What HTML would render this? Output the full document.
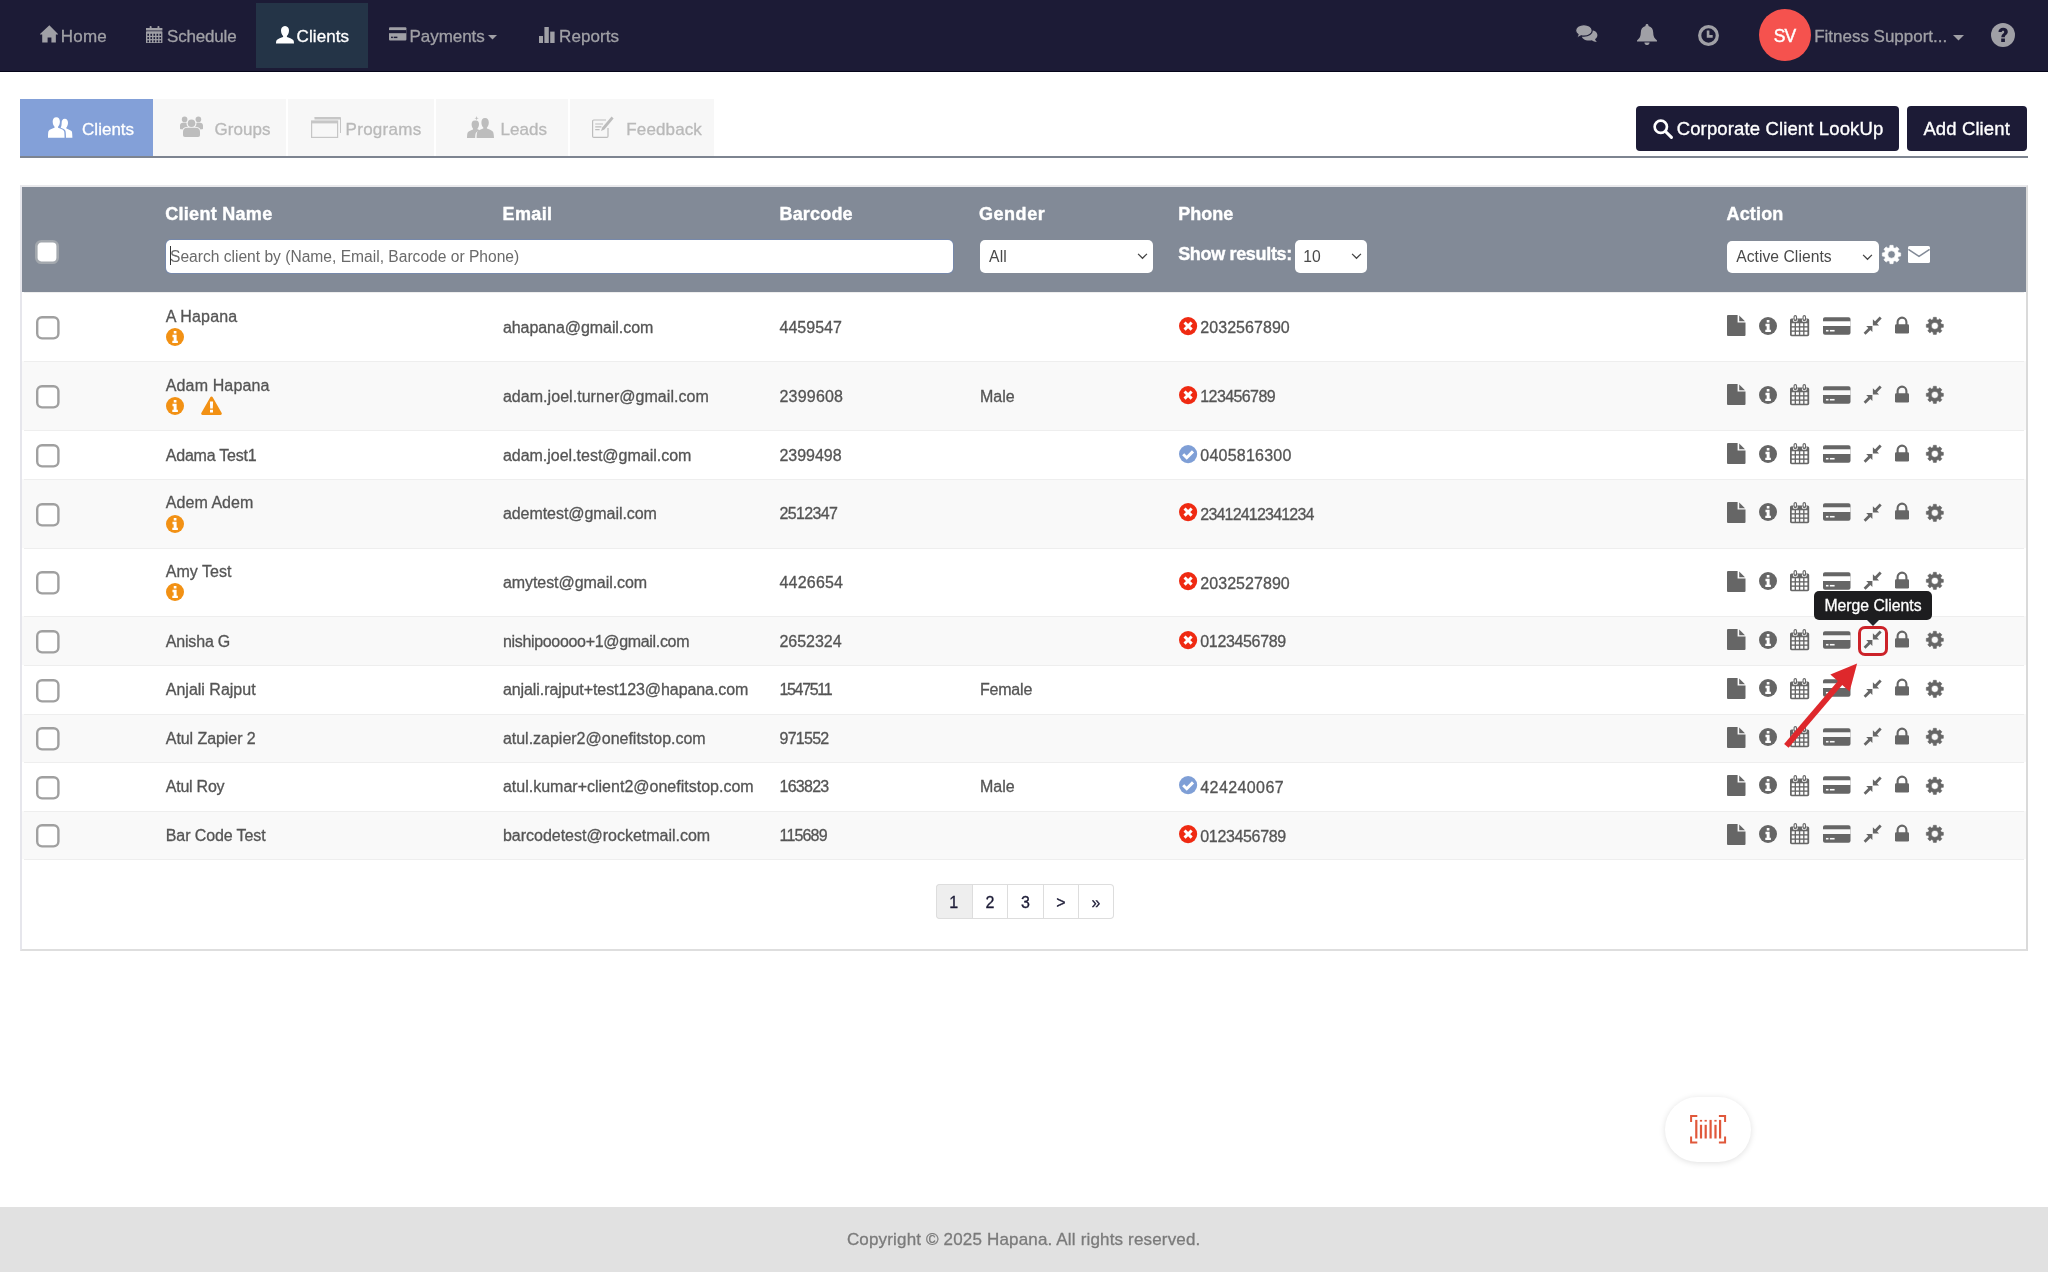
<!DOCTYPE html>
<html lang="en">
<head>
<meta charset="utf-8">
<title>Clients</title>
<style>
*{box-sizing:border-box;}
html,body{margin:0;padding:0;}
body{will-change:transform;width:2048px;height:1273px;overflow:hidden;background:#fff;font-family:"Liberation Sans",sans-serif;font-size:16px;color:#555;position:relative;}
.abs{position:absolute;}
svg{display:block;overflow:visible;}
i{display:block;}
#nav{position:absolute;left:0;top:0;width:2048px;height:72px;background:#1c1b36;border-bottom:1px solid #05051a;}
#nav .it{position:absolute;top:1px;height:71px;line-height:71px;color:#a0a0a6;font-size:17px;white-space:nowrap;-webkit-text-stroke:0.3px;}
#nav .act{position:absolute;left:256px;top:3px;width:112px;height:65px;background:#243447;}
.tab{position:absolute;top:99px;height:57px;background:#f7f7f7;color:#b9b9b9;font-size:17px;line-height:61px;white-space:nowrap;-webkit-text-stroke:0.3px;}
.tab span{position:absolute;top:0;}
.tab.on{background:#83a0d8;color:#fff;}
#tabline{position:absolute;left:20px;top:156px;width:2008px;height:2.4px;background:#7d8490;}
.btn{position:absolute;top:106px;height:45px;background:#1c1b36;color:#fff;border-radius:4px;font-size:18px;line-height:45px;white-space:nowrap;-webkit-text-stroke:0.35px;}
#panel{position:absolute;left:20px;top:185px;width:2008px;height:766px;border:2px solid #dadada;border-top-color:#e9e9ec;border-left-color:#e6e6ec;border-bottom-color:#dedede;background:#fff;}
#thead{position:absolute;left:22px;top:187px;width:2004px;height:105px;background:#828a97;}
.th{position:absolute;top:202.8px;color:#fff;font-weight:bold;font-size:18px;line-height:22px;white-space:nowrap;letter-spacing:0.15px;-webkit-text-stroke:0.4px #fff;}
.inp{position:absolute;background:#fff;border-radius:5px;height:32px;line-height:32px;font-size:15.7px;color:#4a4a4a;white-space:nowrap;}
.row{position:absolute;left:22px;width:2004px;}
.ln{position:absolute;left:2px;top:0;width:2000px;height:1px;background:#eeeeee;}
.row.alt{background:#f9f9f9;}
.row .c{position:absolute;white-space:nowrap;line-height:20px;font-size:16px;color:#555;-webkit-text-stroke:0.3px #555;}
.cb{position:absolute;left:14px;width:23px;height:23px;border:2px solid #999;border-radius:5px;background:#fff;}
#pag{position:absolute;left:935.5px;top:884px;height:35px;width:178.5px;display:flex;box-shadow:inset 0 0 0 1px #ddd;border-radius:4px;overflow:hidden;background:#fff;}
.pg{height:35px;line-height:38px;-webkit-text-stroke:0.3px;text-align:center;font-size:16px;color:#1c1b36;border-left:1px solid #ddd;}
.pg:first-child{border-left:none;}
.pg.on{background:#eee;box-shadow:inset 1px 0 0 #ddd,inset 0 1px 0 #ddd,inset 0 -1px 0 #ddd;border-radius:4px 0 0 4px;}

</style>
</head>
<body>
<div id="nav">
<div class="act"></div>
<svg class="abs" style="left:40px;top:25px" width="18" height="18" viewBox="0 0 18 18" ><path d="M9.35,0.2 L18,9.0 V9.5 H15.85 V17.6 H11.4 V12.6 H7.6 V17.6 H2.2 V9.5 H0 V9.0z" fill="#a0a0a6"/></svg>
<div class="it" style="left:60.8px;letter-spacing:0.185px">Home</div>
<svg class="abs" style="left:146.4px;top:25.9px" width="16.4" height="17.1" viewBox="0 0 16.4 17.1" ><rect x="0" y="2.0" width="16.4" height="2.5" fill="#a0a0a6"/><rect x="0" y="5.3" width="16.4" height="11.8" rx="0.6" fill="#a0a0a6"/><rect x="1.4" y="7.8" width="1.6" height="2.0" fill="#1c1b36"/><rect x="4.45" y="7.8" width="1.6" height="2.0" fill="#1c1b36"/><rect x="7.5" y="7.8" width="1.6" height="2.0" fill="#1c1b36"/><rect x="10.55" y="7.8" width="1.6" height="2.0" fill="#1c1b36"/><rect x="13.5" y="7.8" width="1.6" height="2.0" fill="#1c1b36"/><rect x="1.4" y="11.1" width="1.6" height="2.0" fill="#1c1b36"/><rect x="4.45" y="11.1" width="1.6" height="2.0" fill="#1c1b36"/><rect x="7.5" y="11.1" width="1.6" height="2.0" fill="#1c1b36"/><rect x="10.55" y="11.1" width="1.6" height="2.0" fill="#1c1b36"/><rect x="13.5" y="11.1" width="1.6" height="2.0" fill="#1c1b36"/><rect x="1.4" y="14.3" width="1.6" height="2.0" fill="#1c1b36"/><rect x="4.45" y="14.3" width="1.6" height="2.0" fill="#1c1b36"/><rect x="7.5" y="14.3" width="1.6" height="2.0" fill="#1c1b36"/><rect x="10.55" y="14.3" width="1.6" height="2.0" fill="#1c1b36"/><rect x="13.5" y="14.3" width="1.6" height="2.0" fill="#1c1b36"/><rect x="3.7" y="0" width="1.9" height="3.0" rx="0.8" fill="#a0a0a6"/><rect x="11.5" y="0" width="1.9" height="3.0" rx="0.8" fill="#a0a0a6"/></svg>
<div class="it" style="left:167.0px;letter-spacing:-0.174px">Schedule</div>
<svg class="abs" style="left:276px;top:26px" width="18" height="17.5" viewBox="0 0 18 17.5" ><path d="M9,0 C11.8,0 13,2.2 13,4.600 C13,7 12,9 10.900,10 V11 C12.5,11.8 16.4,12.6 17.400,14.200 C17.9,15 18,16.4 18,17.5 H0 C0,16.4 0.1,15 0.600,14.200 C1.6,12.6 5.5,11.8 7.100,11 V10 C6,9 5,7 5,4.600 C5,2.2 6.2,0 9,0z" fill="#fff"/></svg>
<div class="it" style="color:#fff;left:296.6px;letter-spacing:0.076px">Clients</div>
<svg class="abs" style="left:388.5px;top:27.2px" width="17.4" height="13.8" viewBox="0 0 17 13" ><rect x="0" y="0" width="17" height="13" rx="1" fill="#a0a0a6"/><rect x="0" y="2.8" width="17" height="3.000" fill="#1c1b36"/><rect x="2" y="9.2" width="1.8" height="1.4" fill="#1c1b36"/><rect x="4.6" y="9.2" width="3.6" height="1.4" fill="#1c1b36"/></svg>
<div class="it" style="left:409.5px;letter-spacing:-0.049px">Payments</div>
<svg class="abs" style="left:488px;top:35px" width="9" height="4.5" viewBox="0 0 10 5" ><path d="M0,0 H10 L5,5z" fill="#a0a0a6"/></svg>
<svg class="abs" style="left:539px;top:27px" width="16" height="16" viewBox="0 0 16 16" ><rect x="0" y="9" width="4" height="7" fill="#a0a0a6"/><rect x="5.4" y="0" width="4.4" height="16" fill="#a0a0a6"/><rect x="11.2" y="4.6" width="4.4" height="11.4" fill="#a0a0a6"/></svg>
<div class="it" style="left:559.1px;letter-spacing:0.081px">Reports</div>
<svg class="abs" style="left:1575px;top:24.4px" width="23" height="18.5" viewBox="-0.6 -0.6 23.2 18.6" ><path d="M13.6,5.2 C18.6,5.2 22,7.6 22,10.600 C22,12.2 21,13.600 19.6,14.600 C19.8,15.6 20.4,16.600 21.400,17.400 C19.6,17.4 17.8,16.800 16.400,15.800 C15.6,16 14.6,16 13.600,16 C9,16 6,13.600 6,10.600 C6,7.6 9,5.2 13.600,5.2z" fill="#a0a0a6"/><path d="M8.400,0 C13.200,0 16.800,2.500 16.800,5.800 C16.800,9.100 13.200,11.600 8.400,11.600 C7.500,11.600 6.600,11.500 5.800,11.300 C4.400,12.400 2.600,13.000 0.700,13.000 C1.700,12.100 2.300,11.000 2.500,9.900 C1.000,8.900 0,7.400 0,5.800 C0,2.500 3.600,0 8.400,0z" fill="#a0a0a6" stroke="#1c1b36" stroke-width="1.2"/></svg>
<svg class="abs" style="left:1637px;top:24px" width="20" height="21" viewBox="0 0 20 21" ><path d="M10,0 C10.900,0 11.500,0.600 11.500,1.500 V2.000 C14.600,2.700 16.200,5.400 16.200,8.600 C16.200,12.400 17.400,14.600 20,16.400 V17.400 H0 V16.400 C2.600,14.600 3.800,12.400 3.800,8.600 C3.800,5.400 5.400,2.700 8.500,2.000 V1.500 C8.500,0.600 9.100,0 10,0z M7.400,18.400 H12.600 C12.600,19.900 11.500,21 10,21 C8.500,21 7.400,19.900 7.400,18.400z" fill="#a0a0a6"/></svg>
<svg class="abs" style="left:1698px;top:25px" width="21" height="21" viewBox="0 0 20 20" ><circle cx="10" cy="10" r="8.400" fill="none" stroke="#a0a0a6" stroke-width="3.100"/><path d="M9.600,5.2 V10.8 H14.000" stroke="#a0a0a6" stroke-width="2.500" fill="none"/></svg>
<div class="abs" style="left:1759px;top:9px;width:52px;height:52px;border-radius:50%;background:#f5524e;color:#fff;font-size:17.5px;letter-spacing:-0.8px;-webkit-text-stroke:0.45px #fff;line-height:54px;text-align:center;text-indent:-1px;">SV</div>
<div class="it" style="left:1814.2px;letter-spacing:-0.013px">Fitness Support...</div>
<svg class="abs" style="left:1953px;top:35px" width="11" height="5.5" viewBox="0 0 10 5" ><path d="M0,0 H10 L5,5z" fill="#a0a0a6"/></svg>
<svg class="abs" style="left:1990.6px;top:22.8px" width="24" height="24" viewBox="0 0 20 20" ><circle cx="10" cy="10" r="10" fill="#a0a0a6"/><path d="M6.200,7.600 C6.200,5.200 7.900,3.900 10.100,3.900 C12.300,3.900 14.000,5.200 14.000,7.200 C14.000,9.600 11.500,9.800 11.500,11.800 H8.600 C8.600,9.000 11.000,8.800 11.000,7.400 C11.000,6.800 10.700,6.400 10.000,6.400 C9.300,6.400 9.000,6.900 9.000,7.600z M8.500,13.000 H11.600 V15.900 H8.500z" fill="#1c1b36"/></svg>
</div>
<div class="tab on" style="left:20px;width:133px"><svg class="abs" style="left:27.6px;top:18px" width="24.4" height="21" viewBox="0 0 25 21" ><path d="M8.500,0 C11,0 12.200,2.000 12.200,4.400 C12.200,6.800 11.300,8.800 10.300,9.800 V10.800 C11.800,11.600 15.400,12.400 16.400,14.000 C16.900,14.800 17,19.000 17,21 H0 C0,19.000 0.100,14.800 0.600,14.000 C1.600,12.400 5.200,11.600 6.700,10.800 V9.800 C5.700,8.800 4.800,6.800 4.800,4.400 C4.800,2.000 6,0 8.500,0z" fill="#fff"/><path d="M17.200,1.600 C19.400,1.600 20.500,3.400 20.500,5.600 C20.500,7.800 19.700,9.600 18.800,10.500 V11.400 C20.200,12.100 23.400,12.900 24.300,14.300 C24.800,15.100 25,19.200 25,21 H18.400 C18.400,18.600 18.300,14.600 17.600,13.400 C16.900,12.300 14.600,11.500 13.000,10.800 C13.600,9.600 14.000,8.000 14.000,5.600 C14.000,3.400 15.000,1.600 17.200,1.600z" fill="#fff"/></svg><span style="left:62.1px;letter-spacing:0.004px">Clients</span></div>
<div class="tab" style="left:153px;width:133px"><svg class="abs" style="left:27px;top:17px" width="23" height="21" viewBox="0 0 23 21" ><circle cx="11.500" cy="7.200" r="3.800" fill="#bdbdbd"/><path d="M5.000,21 C3.600,21 3.000,20.200 3.000,19.000 V15.600 C3.000,13.200 4.800,11.800 7.000,11.800 H16.000 C18.200,11.800 20.000,13.200 20.000,15.600 V19.000 C20.000,20.200 19.400,21 18.000,21z" fill="#bdbdbd"/><circle cx="4.600" cy="3.400" r="2.800" fill="#bdbdbd"/><circle cx="18.400" cy="3.400" r="2.800" fill="#bdbdbd"/><path d="M0,12.600 V9.600 C0,8.000 1.200,6.800 2.800,6.800 H6.600 C6.400,8.600 7.000,10.000 8.000,10.800 C5.400,10.800 3.400,11.600 2.400,13.400 C1.000,13.400 0,13.400 0,12.600z" fill="#bdbdbd"/><path d="M23,12.600 V9.600 C23,8.000 21.800,6.800 20.200,6.800 H16.400 C16.600,8.600 16.000,10.000 15.000,10.800 C17.600,10.800 19.600,11.600 20.600,13.400 C22.000,13.400 23,13.400 23,12.600z" fill="#bdbdbd"/></svg><span style="left:61.5px;letter-spacing:0.042px">Groups</span></div>
<div class="tab" style="left:288px;width:146px"><svg class="abs" style="left:23px;top:18px" width="30" height="21" viewBox="0 0 30 21" ><path d="M3.500,0.500 H29.500 V16.000" fill="none" stroke="#c6c6c6" stroke-width="1"/><rect x="3.500" y="0.500" width="26" height="2.000" fill="#c6c6c6"/><rect x="0.600" y="4.000" width="26" height="16.400" fill="none" stroke="#c6c6c6" stroke-width="1.200"/><rect x="0.600" y="4.000" width="26" height="2.400" fill="#c6c6c6"/></svg><span style="left:57.6px;letter-spacing:0.27px">Programs</span></div>
<div class="tab" style="left:436px;width:132px"><svg class="abs" style="left:31px;top:17.2px" width="27" height="22" viewBox="0 0 27 22" ><path d="M18.000,2.000 C20.600,2.000 21.800,4.000 21.800,6.400 C21.800,8.800 20.900,10.600 19.900,11.600 V12.600 C21.400,13.400 25.000,14.200 26.000,15.800 C26.500,16.600 27,20.000 27,22 H9.600 C9.600,20.000 9.800,16.600 10.300,15.800 C11.300,14.200 14.800,13.400 16.300,12.600 V11.600 C15.300,10.600 14.400,8.800 14.400,6.400 C14.400,4.000 15.500,2.000 18.000,2.000z" fill="#bdbdbd"/><path d="M9.000,4.400 C11.000,4.400 12.000,6.000 12.000,8.000 C12.000,10.000 11.300,11.600 10.500,12.400 V13.200 C11.200,13.600 12.200,13.900 13.200,14.300 C11.000,15.200 9.400,15.800 8.800,17.000 C8.300,18.000 8.200,20.400 8.200,22 H0 C0,20.400 0.200,17.200 0.700,16.400 C1.600,15.000 4.600,14.000 6.000,13.400 V12.400 C5.200,11.600 4.600,10.000 4.600,8.000 C4.600,6.000 5.600,4.400 7.600,4.400z" fill="#bdbdbd"/><path d="M9.600,0 L10.100,1.700 L11.800,2.200 L10.100,2.700 L9.600,4.400 L9.100,2.700 L7.400,2.200 L9.100,1.700z" fill="#bdbdbd"/></svg><span style="left:64.6px;letter-spacing:0.014px">Leads</span></div>
<div class="tab" style="left:570px;width:144px"><svg class="abs" style="left:22px;top:17px" width="22" height="22" viewBox="0 0 22 22" ><path d="M14.000,4.000 H1.800 a1.200,1.200 0 0 0 -1.200,1.200 V20.200 a1.200,1.200 0 0 0 1.200,1.200 H14.800 a1.200,1.200 0 0 0 1.200,-1.200 V12.000" fill="none" stroke="#bdbdbd" stroke-width="1.200"/><path d="M3.200,8.000 H11.000 M3.200,10.800 H9.400 M3.200,13.600 H7.600" stroke="#bdbdbd" stroke-width="1.200"/><path d="M19.600,0.600 L21.600,2.600 L12.400,13.400 L9.000,15.000 L10.200,11.400z" fill="#bdbdbd"/></svg><span style="left:56.3px;letter-spacing:0.129px">Feedback</span></div>
<div id="tabline"></div>
<div class="btn" style="left:1636px;width:263px"><svg class="abs" style="left:17px;top:13px" width="20" height="20" viewBox="0 0 19.5 19.5" ><circle cx="7.600" cy="7.600" r="6.000" fill="none" stroke="#fff" stroke-width="2.600"/><path d="M12.200,12.200 L18,18" stroke="#fff" stroke-width="3.000" stroke-linecap="round"/></svg><span class="abs" style="font-size:18.5px;left:40.7px;letter-spacing:0.134px">Corporate Client LookUp</span></div>
<div class="btn" style="left:1907px;width:120px"><span class="abs" style="font-size:18.5px;left:16.4px;letter-spacing:0.114px">Add Client</span></div>
<div id="panel"></div><div id="thead"></div>
<div class="th" style="left:165.2px;letter-spacing:0.297px">Client Name</div>
<div class="th" style="left:502.5px;letter-spacing:0.394px">Email</div>
<div class="th" style="left:779.5px;letter-spacing:0.174px">Barcode</div>
<div class="th" style="left:979.0px;letter-spacing:0.536px">Gender</div>
<div class="th" style="left:1178.2px;letter-spacing:0.047px">Phone</div>
<div class="th" style="left:1726.5px;letter-spacing:0.167px">Action</div>
<div class="th" style="top:242.6px;left:1178.2px;letter-spacing:-0.333px">Show results:</div>
<svg class="abs" style="left:35px;top:240px" width="24" height="24" viewBox="0 0 24 24" ><rect x="1.3" y="1.3" width="21.4" height="21.4" rx="5" fill="#fff" stroke="#a3a8ae" stroke-width="2.6"/></svg>
<div class="inp" style="left:166px;top:239.5px;width:786.5px;height:33px;line-height:33px;box-shadow:0 0 0 1px rgba(110,135,185,0.55);"><span class="abs" style="font-size:15.6px;color:#6a6a6a;left:4.0px;letter-spacing:-0.002px">Search client by (Name, Email, Barcode or Phone)</span><i class="abs" style="left:4px;top:6.5px;width:1px;height:19px;background:#333"></i></div>
<div class="inp" style="left:979.5px;top:239.5px;width:173px;height:33px;line-height:33px"><span class="abs" style="left:9.6px;letter-spacing:0.154px">All</span><svg class="abs" style="left:157.5px;top:13.5px" width="11" height="6.2" viewBox="0 0 12 7" ><path d="M1,1 L6,6 L11,1" stroke="#444" stroke-width="1.400" fill="none"/></svg></div>
<div class="inp" style="left:1295px;top:239.5px;width:72px;height:33px;line-height:33px"><span class="abs" style="left:8.3px;letter-spacing:-0.077px">10</span><svg class="abs" style="left:56.3px;top:13.5px" width="11" height="6.2" viewBox="0 0 12 7" ><path d="M1,1 L6,6 L11,1" stroke="#444" stroke-width="1.400" fill="none"/></svg></div>
<div class="inp" style="left:1727px;top:241px;width:152px"><span class="abs" style="left:9.2px;letter-spacing:0.033px">Active Clients</span><svg class="abs" style="left:135px;top:13px" width="11" height="6.2" viewBox="0 0 12 7" ><path d="M1,1 L6,6 L11,1" stroke="#444" stroke-width="1.400" fill="none"/></svg></div>
<svg class="abs" style="left:1882px;top:245px" width="19" height="19" viewBox="0 0 20 20" ><path d="M17.23,8.02 L19.65,8.32 L19.65,11.68 L17.23,11.98 L16.51,13.72 L18.02,15.64 L15.64,18.02 L13.72,16.51 L11.98,17.23 L11.68,19.65 L8.32,19.65 L8.02,17.23 L6.28,16.51 L4.36,18.02 L1.98,15.64 L3.49,13.72 L2.77,11.98 L0.35,11.68 L0.35,8.32 L2.77,8.02 L3.49,6.28 L1.98,4.36 L4.36,1.98 L6.28,3.49 L8.02,2.77 L8.32,0.35 L11.68,0.35 L11.98,2.77 L13.72,3.49 L15.64,1.98 L18.02,4.36 L16.51,6.28Z M13.90,10.00 A3.9,3.9 0 1 0 6.10,10.00 A3.9,3.9 0 1 0 13.90,10.00Z" fill="#fff" fill-rule="evenodd" stroke="#fff" stroke-width="0.6" stroke-linejoin="round"/></svg>
<svg class="abs" style="left:1908px;top:246px" width="22" height="17" viewBox="0 0 22 17" ><rect x="0" y="0" width="22" height="17" rx="1.600" fill="#fff"/><path d="M0.400,3.400 L11,10.400 L21.600,3.400" stroke="#828a97" stroke-width="1.500" fill="none"/></svg>
<div class="row" style="top:292px;height:69px"><i class="ln"></i><svg class="abs" style="left:14.200000000000003px;top:24.0px" width="23.6" height="23.6" viewBox="0 0 23.6 23.6" ><rect x="1.2" y="1.2" width="21.200000000000003" height="21.200000000000003" rx="4.8" fill="#fff" stroke="#a0a0a0" stroke-width="2.4"/></svg><div class="c" style="left:143.8px;top:14.5px;letter-spacing:0.152px">A Hapana</div><svg class="abs" style="left:144px;top:36.0px" width="18" height="18" viewBox="0 0 20 20" ><circle cx="10" cy="10" r="10" fill="#f29114"/><path d="M8.6,3.2 h3 v2.9 h-3z M7.2,7.6 h4.6 v6.6 h1.4 v2.6 H7 v-2.6 h1.5 v-4 H7.2z" fill="#fff"/></svg><div class="c" style="left:480.9px;top:25.7px;letter-spacing:-0.061px">ahapana@gmail.com</div><div class="c" style="left:757.5px;top:25.7px;letter-spacing:0.015px">4459547</div><svg class="abs" style="left:1156.8px;top:24.6px" width="18.2" height="18.2" viewBox="0 0 20 20" ><circle cx="10" cy="10" r="10" fill="#ef2a12"/><path d="M6.1,6.1 L13.9,13.9 M13.9,6.1 L6.1,13.9" stroke="#fff" stroke-width="3.3" stroke-linecap="butt"/></svg><div class="c" style="left:1178.3px;top:26.3px;letter-spacing:0.052px">2032567890</div><svg class="abs" style="left:1705px;top:23.3px" width="18.5" height="21" viewBox="0 0 18.5 21" ><path d="M1,0 H10.6 V7.6 H18.5 V20 a1,1 0 0 1 -1,1 H1 a1,1 0 0 1 -1,-1 V1 a1,1 0 0 1 1,-1z M12.2,0.6 L18,6.2 H12.2z" fill="#666"/></svg><svg class="abs" style="left:1736.5px;top:24.7px" width="18" height="18" viewBox="0 0 20 20" ><circle cx="10" cy="10" r="10" fill="#666"/><path d="M8.6,3.2 h3 v2.9 h-3z M7.2,7.6 h4.6 v6.6 h1.4 v2.6 H7 v-2.6 h1.5 v-4 H7.2z" fill="#fff"/></svg><svg class="abs" style="left:1768px;top:23.2px" width="19.2" height="21.2" viewBox="0 0 19.2 21.2" ><rect x="0" y="3.5" width="19.2" height="17.7" rx="1.6" fill="#666"/><rect x="1.75" y="8.30" width="2.9" height="2.9" fill="#fff"/><rect x="6.00" y="8.30" width="2.9" height="2.9" fill="#fff"/><rect x="10.25" y="8.30" width="2.9" height="2.9" fill="#fff"/><rect x="14.50" y="8.30" width="2.9" height="2.9" fill="#fff"/><rect x="1.75" y="12.55" width="2.9" height="2.9" fill="#fff"/><rect x="6.00" y="12.55" width="2.9" height="2.9" fill="#fff"/><rect x="10.25" y="12.55" width="2.9" height="2.9" fill="#fff"/><rect x="14.50" y="12.55" width="2.9" height="2.9" fill="#fff"/><rect x="1.75" y="16.80" width="2.9" height="2.9" fill="#fff"/><rect x="6.00" y="16.80" width="2.9" height="2.9" fill="#fff"/><rect x="10.25" y="16.80" width="2.9" height="2.9" fill="#fff"/><rect x="14.50" y="16.80" width="2.9" height="2.9" fill="#fff"/><rect x="2.95" y="3.5" width="4.7" height="3.3" rx="1.2" fill="#fff"/><rect x="3.55" y="0" width="3.5" height="6.2" rx="1.75" fill="#666"/><rect x="4.65" y="1.2" width="1.3" height="3.4" rx="0.65" fill="#fff"/><rect x="11.95" y="3.5" width="4.7" height="3.3" rx="1.2" fill="#fff"/><rect x="12.55" y="0" width="3.5" height="6.2" rx="1.75" fill="#666"/><rect x="13.65" y="1.2" width="1.3" height="3.4" rx="0.65" fill="#fff"/></svg><svg class="abs" style="left:1801px;top:24.7px" width="27.5" height="18" viewBox="0 0 28 18" ><rect x="0" y="0" width="28" height="18" rx="2" fill="#666"/><rect x="0" y="4.2" width="28" height="4.8" fill="#fff"/><rect x="3" y="13" width="2.6" height="1.6" fill="#fff"/><rect x="7.0" y="13" width="4.8" height="1.6" fill="#fff"/></svg><svg class="abs" style="left:1842.1px;top:24.8px" width="17.3" height="17.3" viewBox="0 0 17.3 17.3" ><path d="M16.7,0.6 L11.4,5.9" stroke="#666" stroke-width="2.8" fill="none"/><path d="M8.9,2.2 V8.4 H15.1z" fill="#666"/><path d="M0.6,16.7 L5.9,11.4" stroke="#666" stroke-width="2.8" fill="none"/><path d="M8.4,15.1 V8.9 H2.2z" fill="#666"/></svg><svg class="abs" style="left:1873px;top:24.7px" width="14" height="16.5" viewBox="0 0 14 16.5" ><path d="M2.6,8 V5 a4.4,4.4 0 0 1 8.8,0 V8" stroke="#666" stroke-width="2.1" fill="none"/><rect x="0" y="7.2" width="14" height="9.3" rx="1.2" fill="#666"/></svg><svg class="abs" style="left:1903.6px;top:24.8px" width="17.7" height="17.7" viewBox="0 0 20 20" ><path d="M17.23,8.02 L19.65,8.32 L19.65,11.68 L17.23,11.98 L16.51,13.72 L18.02,15.64 L15.64,18.02 L13.72,16.51 L11.98,17.23 L11.68,19.65 L8.32,19.65 L8.02,17.23 L6.28,16.51 L4.36,18.02 L1.98,15.64 L3.49,13.72 L2.77,11.98 L0.35,11.68 L0.35,8.32 L2.77,8.02 L3.49,6.28 L1.98,4.36 L4.36,1.98 L6.28,3.49 L8.02,2.77 L8.32,0.35 L11.68,0.35 L11.98,2.77 L13.72,3.49 L15.64,1.98 L18.02,4.36 L16.51,6.28Z M13.90,10.00 A3.9,3.9 0 1 0 6.10,10.00 A3.9,3.9 0 1 0 13.90,10.00Z" fill="#666" fill-rule="evenodd" stroke="#666" stroke-width="0.6" stroke-linejoin="round"/></svg></div>
<div class="row alt" style="top:361px;height:69px"><i class="ln"></i><svg class="abs" style="left:14.200000000000003px;top:24.0px" width="23.6" height="23.6" viewBox="0 0 23.6 23.6" ><rect x="1.2" y="1.2" width="21.200000000000003" height="21.200000000000003" rx="4.8" fill="#fff" stroke="#a0a0a0" stroke-width="2.4"/></svg><div class="c" style="left:143.8px;top:14.5px;letter-spacing:0.128px">Adam Hapana</div><svg class="abs" style="left:144px;top:36.0px" width="18" height="18" viewBox="0 0 20 20" ><circle cx="10" cy="10" r="10" fill="#f29114"/><path d="M8.6,3.2 h3 v2.9 h-3z M7.2,7.6 h4.6 v6.6 h1.4 v2.6 H7 v-2.6 h1.5 v-4 H7.2z" fill="#fff"/></svg><svg class="abs" style="left:179px;top:35.0px" width="21" height="19" viewBox="0 0 21 19" ><path d="M10.5,0.6 a1.4,1.4 0 0 1 1.2,0.7 L20.7,17 a1.4,1.4 0 0 1 -1.2,2 H1.500 a1.4,1.4 0 0 1 -1.2,-2 L9.3,1.300 a1.4,1.4 0 0 1 1.2,-0.7z" fill="#f29114"/><path d="M8.9,5.6 h3.2 l-0.300,7.000 h-2.600z M9.000,13.800 h3.000 v2.800 h-3.000z" fill="#fff"/></svg><div class="c" style="left:480.9px;top:25.7px;letter-spacing:0.047px">adam.joel.turner@gmail.com</div><div class="c" style="left:757.5px;top:25.7px;letter-spacing:0.2px">2399608</div><div class="c" style="left:957.9px;top:25.7px;letter-spacing:0.053px">Male</div><svg class="abs" style="left:1156.8px;top:24.6px" width="18.2" height="18.2" viewBox="0 0 20 20" ><circle cx="10" cy="10" r="10" fill="#ef2a12"/><path d="M6.1,6.1 L13.9,13.9 M13.9,6.1 L6.1,13.9" stroke="#fff" stroke-width="3.3" stroke-linecap="butt"/></svg><div class="c" style="left:1178.3px;top:26.3px;letter-spacing:-0.599px">123456789</div><svg class="abs" style="left:1705px;top:23.3px" width="18.5" height="21" viewBox="0 0 18.5 21" ><path d="M1,0 H10.6 V7.6 H18.5 V20 a1,1 0 0 1 -1,1 H1 a1,1 0 0 1 -1,-1 V1 a1,1 0 0 1 1,-1z M12.2,0.6 L18,6.2 H12.2z" fill="#666"/></svg><svg class="abs" style="left:1736.5px;top:24.7px" width="18" height="18" viewBox="0 0 20 20" ><circle cx="10" cy="10" r="10" fill="#666"/><path d="M8.6,3.2 h3 v2.9 h-3z M7.2,7.6 h4.6 v6.6 h1.4 v2.6 H7 v-2.6 h1.5 v-4 H7.2z" fill="#fff"/></svg><svg class="abs" style="left:1768px;top:23.2px" width="19.2" height="21.2" viewBox="0 0 19.2 21.2" ><rect x="0" y="3.5" width="19.2" height="17.7" rx="1.6" fill="#666"/><rect x="1.75" y="8.30" width="2.9" height="2.9" fill="#f9f9f9"/><rect x="6.00" y="8.30" width="2.9" height="2.9" fill="#f9f9f9"/><rect x="10.25" y="8.30" width="2.9" height="2.9" fill="#f9f9f9"/><rect x="14.50" y="8.30" width="2.9" height="2.9" fill="#f9f9f9"/><rect x="1.75" y="12.55" width="2.9" height="2.9" fill="#f9f9f9"/><rect x="6.00" y="12.55" width="2.9" height="2.9" fill="#f9f9f9"/><rect x="10.25" y="12.55" width="2.9" height="2.9" fill="#f9f9f9"/><rect x="14.50" y="12.55" width="2.9" height="2.9" fill="#f9f9f9"/><rect x="1.75" y="16.80" width="2.9" height="2.9" fill="#f9f9f9"/><rect x="6.00" y="16.80" width="2.9" height="2.9" fill="#f9f9f9"/><rect x="10.25" y="16.80" width="2.9" height="2.9" fill="#f9f9f9"/><rect x="14.50" y="16.80" width="2.9" height="2.9" fill="#f9f9f9"/><rect x="2.95" y="3.5" width="4.7" height="3.3" rx="1.2" fill="#f9f9f9"/><rect x="3.55" y="0" width="3.5" height="6.2" rx="1.75" fill="#666"/><rect x="4.65" y="1.2" width="1.3" height="3.4" rx="0.65" fill="#f9f9f9"/><rect x="11.95" y="3.5" width="4.7" height="3.3" rx="1.2" fill="#f9f9f9"/><rect x="12.55" y="0" width="3.5" height="6.2" rx="1.75" fill="#666"/><rect x="13.65" y="1.2" width="1.3" height="3.4" rx="0.65" fill="#f9f9f9"/></svg><svg class="abs" style="left:1801px;top:24.7px" width="27.5" height="18" viewBox="0 0 28 18" ><rect x="0" y="0" width="28" height="18" rx="2" fill="#666"/><rect x="0" y="4.2" width="28" height="4.8" fill="#f9f9f9"/><rect x="3" y="13" width="2.6" height="1.6" fill="#f9f9f9"/><rect x="7.0" y="13" width="4.8" height="1.6" fill="#f9f9f9"/></svg><svg class="abs" style="left:1842.1px;top:24.8px" width="17.3" height="17.3" viewBox="0 0 17.3 17.3" ><path d="M16.7,0.6 L11.4,5.9" stroke="#666" stroke-width="2.8" fill="none"/><path d="M8.9,2.2 V8.4 H15.1z" fill="#666"/><path d="M0.6,16.7 L5.9,11.4" stroke="#666" stroke-width="2.8" fill="none"/><path d="M8.4,15.1 V8.9 H2.2z" fill="#666"/></svg><svg class="abs" style="left:1873px;top:24.7px" width="14" height="16.5" viewBox="0 0 14 16.5" ><path d="M2.6,8 V5 a4.4,4.4 0 0 1 8.8,0 V8" stroke="#666" stroke-width="2.1" fill="none"/><rect x="0" y="7.2" width="14" height="9.3" rx="1.2" fill="#666"/></svg><svg class="abs" style="left:1903.6px;top:24.8px" width="17.7" height="17.7" viewBox="0 0 20 20" ><path d="M17.23,8.02 L19.65,8.32 L19.65,11.68 L17.23,11.98 L16.51,13.72 L18.02,15.64 L15.64,18.02 L13.72,16.51 L11.98,17.23 L11.68,19.65 L8.32,19.65 L8.02,17.23 L6.28,16.51 L4.36,18.02 L1.98,15.64 L3.49,13.72 L2.77,11.98 L0.35,11.68 L0.35,8.32 L2.77,8.02 L3.49,6.28 L1.98,4.36 L4.36,1.98 L6.28,3.49 L8.02,2.77 L8.32,0.35 L11.68,0.35 L11.98,2.77 L13.72,3.49 L15.64,1.98 L18.02,4.36 L16.51,6.28Z M13.90,10.00 A3.9,3.9 0 1 0 6.10,10.00 A3.9,3.9 0 1 0 13.90,10.00Z" fill="#666" fill-rule="evenodd" stroke="#666" stroke-width="0.6" stroke-linejoin="round"/></svg></div>
<div class="row" style="top:430px;height:49px"><i class="ln"></i><svg class="abs" style="left:14.200000000000003px;top:14.0px" width="23.6" height="23.6" viewBox="0 0 23.6 23.6" ><rect x="1.2" y="1.2" width="21.200000000000003" height="21.200000000000003" rx="4.8" fill="#fff" stroke="#a0a0a0" stroke-width="2.4"/></svg><div class="c" style="left:143.8px;top:15.7px;letter-spacing:-0.218px">Adama Test1</div><div class="c" style="left:480.9px;top:15.7px;letter-spacing:-0.011px">adam.joel.test@gmail.com</div><div class="c" style="left:757.5px;top:15.7px;letter-spacing:-0.042px">2399498</div><svg class="abs" style="left:1156.8px;top:14.6px" width="18.2" height="18.2" viewBox="0 0 20 20" ><circle cx="10" cy="10" r="10" fill="#7f9fd6"/><path d="M4.6,10.2 L8.5,14.0 L15.4,7.0" stroke="#fff" stroke-width="3.3" fill="none"/></svg><div class="c" style="left:1178.3px;top:16.3px;letter-spacing:0.232px">0405816300</div><svg class="abs" style="left:1705px;top:13.3px" width="18.5" height="21" viewBox="0 0 18.5 21" ><path d="M1,0 H10.6 V7.6 H18.5 V20 a1,1 0 0 1 -1,1 H1 a1,1 0 0 1 -1,-1 V1 a1,1 0 0 1 1,-1z M12.2,0.6 L18,6.2 H12.2z" fill="#666"/></svg><svg class="abs" style="left:1736.5px;top:14.700000000000001px" width="18" height="18" viewBox="0 0 20 20" ><circle cx="10" cy="10" r="10" fill="#666"/><path d="M8.6,3.2 h3 v2.9 h-3z M7.2,7.6 h4.6 v6.6 h1.4 v2.6 H7 v-2.6 h1.5 v-4 H7.2z" fill="#fff"/></svg><svg class="abs" style="left:1768px;top:13.200000000000001px" width="19.2" height="21.2" viewBox="0 0 19.2 21.2" ><rect x="0" y="3.5" width="19.2" height="17.7" rx="1.6" fill="#666"/><rect x="1.75" y="8.30" width="2.9" height="2.9" fill="#fff"/><rect x="6.00" y="8.30" width="2.9" height="2.9" fill="#fff"/><rect x="10.25" y="8.30" width="2.9" height="2.9" fill="#fff"/><rect x="14.50" y="8.30" width="2.9" height="2.9" fill="#fff"/><rect x="1.75" y="12.55" width="2.9" height="2.9" fill="#fff"/><rect x="6.00" y="12.55" width="2.9" height="2.9" fill="#fff"/><rect x="10.25" y="12.55" width="2.9" height="2.9" fill="#fff"/><rect x="14.50" y="12.55" width="2.9" height="2.9" fill="#fff"/><rect x="1.75" y="16.80" width="2.9" height="2.9" fill="#fff"/><rect x="6.00" y="16.80" width="2.9" height="2.9" fill="#fff"/><rect x="10.25" y="16.80" width="2.9" height="2.9" fill="#fff"/><rect x="14.50" y="16.80" width="2.9" height="2.9" fill="#fff"/><rect x="2.95" y="3.5" width="4.7" height="3.3" rx="1.2" fill="#fff"/><rect x="3.55" y="0" width="3.5" height="6.2" rx="1.75" fill="#666"/><rect x="4.65" y="1.2" width="1.3" height="3.4" rx="0.65" fill="#fff"/><rect x="11.95" y="3.5" width="4.7" height="3.3" rx="1.2" fill="#fff"/><rect x="12.55" y="0" width="3.5" height="6.2" rx="1.75" fill="#666"/><rect x="13.65" y="1.2" width="1.3" height="3.4" rx="0.65" fill="#fff"/></svg><svg class="abs" style="left:1801px;top:14.700000000000001px" width="27.5" height="18" viewBox="0 0 28 18" ><rect x="0" y="0" width="28" height="18" rx="2" fill="#666"/><rect x="0" y="4.2" width="28" height="4.8" fill="#fff"/><rect x="3" y="13" width="2.6" height="1.6" fill="#fff"/><rect x="7.0" y="13" width="4.8" height="1.6" fill="#fff"/></svg><svg class="abs" style="left:1842.1px;top:14.8px" width="17.3" height="17.3" viewBox="0 0 17.3 17.3" ><path d="M16.7,0.6 L11.4,5.9" stroke="#666" stroke-width="2.8" fill="none"/><path d="M8.9,2.2 V8.4 H15.1z" fill="#666"/><path d="M0.6,16.7 L5.9,11.4" stroke="#666" stroke-width="2.8" fill="none"/><path d="M8.4,15.1 V8.9 H2.2z" fill="#666"/></svg><svg class="abs" style="left:1873px;top:14.700000000000001px" width="14" height="16.5" viewBox="0 0 14 16.5" ><path d="M2.6,8 V5 a4.4,4.4 0 0 1 8.8,0 V8" stroke="#666" stroke-width="2.1" fill="none"/><rect x="0" y="7.2" width="14" height="9.3" rx="1.2" fill="#666"/></svg><svg class="abs" style="left:1903.6px;top:14.8px" width="17.7" height="17.7" viewBox="0 0 20 20" ><path d="M17.23,8.02 L19.65,8.32 L19.65,11.68 L17.23,11.98 L16.51,13.72 L18.02,15.64 L15.64,18.02 L13.72,16.51 L11.98,17.23 L11.68,19.65 L8.32,19.65 L8.02,17.23 L6.28,16.51 L4.36,18.02 L1.98,15.64 L3.49,13.72 L2.77,11.98 L0.35,11.68 L0.35,8.32 L2.77,8.02 L3.49,6.28 L1.98,4.36 L4.36,1.98 L6.28,3.49 L8.02,2.77 L8.32,0.35 L11.68,0.35 L11.98,2.77 L13.72,3.49 L15.64,1.98 L18.02,4.36 L16.51,6.28Z M13.90,10.00 A3.9,3.9 0 1 0 6.10,10.00 A3.9,3.9 0 1 0 13.90,10.00Z" fill="#666" fill-rule="evenodd" stroke="#666" stroke-width="0.6" stroke-linejoin="round"/></svg></div>
<div class="row alt" style="top:479px;height:68.5px"><i class="ln"></i><svg class="abs" style="left:14.200000000000003px;top:23.75px" width="23.6" height="23.6" viewBox="0 0 23.6 23.6" ><rect x="1.2" y="1.2" width="21.200000000000003" height="21.200000000000003" rx="4.8" fill="#fff" stroke="#a0a0a0" stroke-width="2.4"/></svg><div class="c" style="left:143.8px;top:14.2px;letter-spacing:0.049px">Adem Adem</div><svg class="abs" style="left:144px;top:35.75px" width="18" height="18" viewBox="0 0 20 20" ><circle cx="10" cy="10" r="10" fill="#f29114"/><path d="M8.6,3.2 h3 v2.9 h-3z M7.2,7.6 h4.6 v6.6 h1.4 v2.6 H7 v-2.6 h1.5 v-4 H7.2z" fill="#fff"/></svg><div class="c" style="left:480.9px;top:25.4px;letter-spacing:-0.054px">ademtest@gmail.com</div><div class="c" style="left:757.5px;top:25.4px;letter-spacing:-0.628px">2512347</div><svg class="abs" style="left:1156.8px;top:24.35px" width="18.2" height="18.2" viewBox="0 0 20 20" ><circle cx="10" cy="10" r="10" fill="#ef2a12"/><path d="M6.1,6.1 L13.9,13.9 M13.9,6.1 L6.1,13.9" stroke="#fff" stroke-width="3.3" stroke-linecap="butt"/></svg><div class="c" style="left:1178.3px;top:26.1px;letter-spacing:-0.806px">23412412341234</div><svg class="abs" style="left:1705px;top:23.05px" width="18.5" height="21" viewBox="0 0 18.5 21" ><path d="M1,0 H10.6 V7.6 H18.5 V20 a1,1 0 0 1 -1,1 H1 a1,1 0 0 1 -1,-1 V1 a1,1 0 0 1 1,-1z M12.2,0.6 L18,6.2 H12.2z" fill="#666"/></svg><svg class="abs" style="left:1736.5px;top:24.45px" width="18" height="18" viewBox="0 0 20 20" ><circle cx="10" cy="10" r="10" fill="#666"/><path d="M8.6,3.2 h3 v2.9 h-3z M7.2,7.6 h4.6 v6.6 h1.4 v2.6 H7 v-2.6 h1.5 v-4 H7.2z" fill="#fff"/></svg><svg class="abs" style="left:1768px;top:22.95px" width="19.2" height="21.2" viewBox="0 0 19.2 21.2" ><rect x="0" y="3.5" width="19.2" height="17.7" rx="1.6" fill="#666"/><rect x="1.75" y="8.30" width="2.9" height="2.9" fill="#f9f9f9"/><rect x="6.00" y="8.30" width="2.9" height="2.9" fill="#f9f9f9"/><rect x="10.25" y="8.30" width="2.9" height="2.9" fill="#f9f9f9"/><rect x="14.50" y="8.30" width="2.9" height="2.9" fill="#f9f9f9"/><rect x="1.75" y="12.55" width="2.9" height="2.9" fill="#f9f9f9"/><rect x="6.00" y="12.55" width="2.9" height="2.9" fill="#f9f9f9"/><rect x="10.25" y="12.55" width="2.9" height="2.9" fill="#f9f9f9"/><rect x="14.50" y="12.55" width="2.9" height="2.9" fill="#f9f9f9"/><rect x="1.75" y="16.80" width="2.9" height="2.9" fill="#f9f9f9"/><rect x="6.00" y="16.80" width="2.9" height="2.9" fill="#f9f9f9"/><rect x="10.25" y="16.80" width="2.9" height="2.9" fill="#f9f9f9"/><rect x="14.50" y="16.80" width="2.9" height="2.9" fill="#f9f9f9"/><rect x="2.95" y="3.5" width="4.7" height="3.3" rx="1.2" fill="#f9f9f9"/><rect x="3.55" y="0" width="3.5" height="6.2" rx="1.75" fill="#666"/><rect x="4.65" y="1.2" width="1.3" height="3.4" rx="0.65" fill="#f9f9f9"/><rect x="11.95" y="3.5" width="4.7" height="3.3" rx="1.2" fill="#f9f9f9"/><rect x="12.55" y="0" width="3.5" height="6.2" rx="1.75" fill="#666"/><rect x="13.65" y="1.2" width="1.3" height="3.4" rx="0.65" fill="#f9f9f9"/></svg><svg class="abs" style="left:1801px;top:24.45px" width="27.5" height="18" viewBox="0 0 28 18" ><rect x="0" y="0" width="28" height="18" rx="2" fill="#666"/><rect x="0" y="4.2" width="28" height="4.8" fill="#f9f9f9"/><rect x="3" y="13" width="2.6" height="1.6" fill="#f9f9f9"/><rect x="7.0" y="13" width="4.8" height="1.6" fill="#f9f9f9"/></svg><svg class="abs" style="left:1842.1px;top:24.55px" width="17.3" height="17.3" viewBox="0 0 17.3 17.3" ><path d="M16.7,0.6 L11.4,5.9" stroke="#666" stroke-width="2.8" fill="none"/><path d="M8.9,2.2 V8.4 H15.1z" fill="#666"/><path d="M0.6,16.7 L5.9,11.4" stroke="#666" stroke-width="2.8" fill="none"/><path d="M8.4,15.1 V8.9 H2.2z" fill="#666"/></svg><svg class="abs" style="left:1873px;top:24.45px" width="14" height="16.5" viewBox="0 0 14 16.5" ><path d="M2.6,8 V5 a4.4,4.4 0 0 1 8.8,0 V8" stroke="#666" stroke-width="2.1" fill="none"/><rect x="0" y="7.2" width="14" height="9.3" rx="1.2" fill="#666"/></svg><svg class="abs" style="left:1903.6px;top:24.55px" width="17.7" height="17.7" viewBox="0 0 20 20" ><path d="M17.23,8.02 L19.65,8.32 L19.65,11.68 L17.23,11.98 L16.51,13.72 L18.02,15.64 L15.64,18.02 L13.72,16.51 L11.98,17.23 L11.68,19.65 L8.32,19.65 L8.02,17.23 L6.28,16.51 L4.36,18.02 L1.98,15.64 L3.49,13.72 L2.77,11.98 L0.35,11.68 L0.35,8.32 L2.77,8.02 L3.49,6.28 L1.98,4.36 L4.36,1.98 L6.28,3.49 L8.02,2.77 L8.32,0.35 L11.68,0.35 L11.98,2.77 L13.72,3.49 L15.64,1.98 L18.02,4.36 L16.51,6.28Z M13.90,10.00 A3.9,3.9 0 1 0 6.10,10.00 A3.9,3.9 0 1 0 13.90,10.00Z" fill="#666" fill-rule="evenodd" stroke="#666" stroke-width="0.6" stroke-linejoin="round"/></svg></div>
<div class="row" style="top:547.5px;height:68.5px"><i class="ln"></i><svg class="abs" style="left:14.200000000000003px;top:23.75px" width="23.6" height="23.6" viewBox="0 0 23.6 23.6" ><rect x="1.2" y="1.2" width="21.200000000000003" height="21.200000000000003" rx="4.8" fill="#fff" stroke="#a0a0a0" stroke-width="2.4"/></svg><div class="c" style="left:143.8px;top:14.2px;letter-spacing:0.025px">Amy Test</div><svg class="abs" style="left:144px;top:35.75px" width="18" height="18" viewBox="0 0 20 20" ><circle cx="10" cy="10" r="10" fill="#f29114"/><path d="M8.6,3.2 h3 v2.9 h-3z M7.2,7.6 h4.6 v6.6 h1.4 v2.6 H7 v-2.6 h1.5 v-4 H7.2z" fill="#fff"/></svg><div class="c" style="left:480.9px;top:25.4px;letter-spacing:-0.057px">amytest@gmail.com</div><div class="c" style="left:757.5px;top:25.4px;letter-spacing:0.2px">4426654</div><svg class="abs" style="left:1156.8px;top:24.35px" width="18.2" height="18.2" viewBox="0 0 20 20" ><circle cx="10" cy="10" r="10" fill="#ef2a12"/><path d="M6.1,6.1 L13.9,13.9 M13.9,6.1 L6.1,13.9" stroke="#fff" stroke-width="3.3" stroke-linecap="butt"/></svg><div class="c" style="left:1178.3px;top:26.1px;letter-spacing:0.052px">2032527890</div><svg class="abs" style="left:1705px;top:23.05px" width="18.5" height="21" viewBox="0 0 18.5 21" ><path d="M1,0 H10.6 V7.6 H18.5 V20 a1,1 0 0 1 -1,1 H1 a1,1 0 0 1 -1,-1 V1 a1,1 0 0 1 1,-1z M12.2,0.6 L18,6.2 H12.2z" fill="#666"/></svg><svg class="abs" style="left:1736.5px;top:24.45px" width="18" height="18" viewBox="0 0 20 20" ><circle cx="10" cy="10" r="10" fill="#666"/><path d="M8.6,3.2 h3 v2.9 h-3z M7.2,7.6 h4.6 v6.6 h1.4 v2.6 H7 v-2.6 h1.5 v-4 H7.2z" fill="#fff"/></svg><svg class="abs" style="left:1768px;top:22.95px" width="19.2" height="21.2" viewBox="0 0 19.2 21.2" ><rect x="0" y="3.5" width="19.2" height="17.7" rx="1.6" fill="#666"/><rect x="1.75" y="8.30" width="2.9" height="2.9" fill="#fff"/><rect x="6.00" y="8.30" width="2.9" height="2.9" fill="#fff"/><rect x="10.25" y="8.30" width="2.9" height="2.9" fill="#fff"/><rect x="14.50" y="8.30" width="2.9" height="2.9" fill="#fff"/><rect x="1.75" y="12.55" width="2.9" height="2.9" fill="#fff"/><rect x="6.00" y="12.55" width="2.9" height="2.9" fill="#fff"/><rect x="10.25" y="12.55" width="2.9" height="2.9" fill="#fff"/><rect x="14.50" y="12.55" width="2.9" height="2.9" fill="#fff"/><rect x="1.75" y="16.80" width="2.9" height="2.9" fill="#fff"/><rect x="6.00" y="16.80" width="2.9" height="2.9" fill="#fff"/><rect x="10.25" y="16.80" width="2.9" height="2.9" fill="#fff"/><rect x="14.50" y="16.80" width="2.9" height="2.9" fill="#fff"/><rect x="2.95" y="3.5" width="4.7" height="3.3" rx="1.2" fill="#fff"/><rect x="3.55" y="0" width="3.5" height="6.2" rx="1.75" fill="#666"/><rect x="4.65" y="1.2" width="1.3" height="3.4" rx="0.65" fill="#fff"/><rect x="11.95" y="3.5" width="4.7" height="3.3" rx="1.2" fill="#fff"/><rect x="12.55" y="0" width="3.5" height="6.2" rx="1.75" fill="#666"/><rect x="13.65" y="1.2" width="1.3" height="3.4" rx="0.65" fill="#fff"/></svg><svg class="abs" style="left:1801px;top:24.45px" width="27.5" height="18" viewBox="0 0 28 18" ><rect x="0" y="0" width="28" height="18" rx="2" fill="#666"/><rect x="0" y="4.2" width="28" height="4.8" fill="#fff"/><rect x="3" y="13" width="2.6" height="1.6" fill="#fff"/><rect x="7.0" y="13" width="4.8" height="1.6" fill="#fff"/></svg><svg class="abs" style="left:1842.1px;top:24.55px" width="17.3" height="17.3" viewBox="0 0 17.3 17.3" ><path d="M16.7,0.6 L11.4,5.9" stroke="#666" stroke-width="2.8" fill="none"/><path d="M8.9,2.2 V8.4 H15.1z" fill="#666"/><path d="M0.6,16.7 L5.9,11.4" stroke="#666" stroke-width="2.8" fill="none"/><path d="M8.4,15.1 V8.9 H2.2z" fill="#666"/></svg><svg class="abs" style="left:1873px;top:24.45px" width="14" height="16.5" viewBox="0 0 14 16.5" ><path d="M2.6,8 V5 a4.4,4.4 0 0 1 8.8,0 V8" stroke="#666" stroke-width="2.1" fill="none"/><rect x="0" y="7.2" width="14" height="9.3" rx="1.2" fill="#666"/></svg><svg class="abs" style="left:1903.6px;top:24.55px" width="17.7" height="17.7" viewBox="0 0 20 20" ><path d="M17.23,8.02 L19.65,8.32 L19.65,11.68 L17.23,11.98 L16.51,13.72 L18.02,15.64 L15.64,18.02 L13.72,16.51 L11.98,17.23 L11.68,19.65 L8.32,19.65 L8.02,17.23 L6.28,16.51 L4.36,18.02 L1.98,15.64 L3.49,13.72 L2.77,11.98 L0.35,11.68 L0.35,8.32 L2.77,8.02 L3.49,6.28 L1.98,4.36 L4.36,1.98 L6.28,3.49 L8.02,2.77 L8.32,0.35 L11.68,0.35 L11.98,2.77 L13.72,3.49 L15.64,1.98 L18.02,4.36 L16.51,6.28Z M13.90,10.00 A3.9,3.9 0 1 0 6.10,10.00 A3.9,3.9 0 1 0 13.90,10.00Z" fill="#666" fill-rule="evenodd" stroke="#666" stroke-width="0.6" stroke-linejoin="round"/></svg></div>
<div class="row alt" style="top:616px;height:49px"><i class="ln"></i><svg class="abs" style="left:14.200000000000003px;top:14.0px" width="23.6" height="23.6" viewBox="0 0 23.6 23.6" ><rect x="1.2" y="1.2" width="21.200000000000003" height="21.200000000000003" rx="4.8" fill="#fff" stroke="#a0a0a0" stroke-width="2.4"/></svg><div class="c" style="left:143.8px;top:15.7px;letter-spacing:-0.189px">Anisha G</div><div class="c" style="left:480.9px;top:15.7px;letter-spacing:-0.321px">nishipooooo+1@gmail.com</div><div class="c" style="left:757.5px;top:15.7px;letter-spacing:-0.042px">2652324</div><svg class="abs" style="left:1156.8px;top:14.6px" width="18.2" height="18.2" viewBox="0 0 20 20" ><circle cx="10" cy="10" r="10" fill="#ef2a12"/><path d="M6.1,6.1 L13.9,13.9 M13.9,6.1 L6.1,13.9" stroke="#fff" stroke-width="3.3" stroke-linecap="butt"/></svg><div class="c" style="left:1178.3px;top:16.3px;letter-spacing:-0.348px">0123456789</div><svg class="abs" style="left:1705px;top:13.3px" width="18.5" height="21" viewBox="0 0 18.5 21" ><path d="M1,0 H10.6 V7.6 H18.5 V20 a1,1 0 0 1 -1,1 H1 a1,1 0 0 1 -1,-1 V1 a1,1 0 0 1 1,-1z M12.2,0.6 L18,6.2 H12.2z" fill="#666"/></svg><svg class="abs" style="left:1736.5px;top:14.700000000000001px" width="18" height="18" viewBox="0 0 20 20" ><circle cx="10" cy="10" r="10" fill="#666"/><path d="M8.6,3.2 h3 v2.9 h-3z M7.2,7.6 h4.6 v6.6 h1.4 v2.6 H7 v-2.6 h1.5 v-4 H7.2z" fill="#fff"/></svg><svg class="abs" style="left:1768px;top:13.200000000000001px" width="19.2" height="21.2" viewBox="0 0 19.2 21.2" ><rect x="0" y="3.5" width="19.2" height="17.7" rx="1.6" fill="#666"/><rect x="1.75" y="8.30" width="2.9" height="2.9" fill="#f9f9f9"/><rect x="6.00" y="8.30" width="2.9" height="2.9" fill="#f9f9f9"/><rect x="10.25" y="8.30" width="2.9" height="2.9" fill="#f9f9f9"/><rect x="14.50" y="8.30" width="2.9" height="2.9" fill="#f9f9f9"/><rect x="1.75" y="12.55" width="2.9" height="2.9" fill="#f9f9f9"/><rect x="6.00" y="12.55" width="2.9" height="2.9" fill="#f9f9f9"/><rect x="10.25" y="12.55" width="2.9" height="2.9" fill="#f9f9f9"/><rect x="14.50" y="12.55" width="2.9" height="2.9" fill="#f9f9f9"/><rect x="1.75" y="16.80" width="2.9" height="2.9" fill="#f9f9f9"/><rect x="6.00" y="16.80" width="2.9" height="2.9" fill="#f9f9f9"/><rect x="10.25" y="16.80" width="2.9" height="2.9" fill="#f9f9f9"/><rect x="14.50" y="16.80" width="2.9" height="2.9" fill="#f9f9f9"/><rect x="2.95" y="3.5" width="4.7" height="3.3" rx="1.2" fill="#f9f9f9"/><rect x="3.55" y="0" width="3.5" height="6.2" rx="1.75" fill="#666"/><rect x="4.65" y="1.2" width="1.3" height="3.4" rx="0.65" fill="#f9f9f9"/><rect x="11.95" y="3.5" width="4.7" height="3.3" rx="1.2" fill="#f9f9f9"/><rect x="12.55" y="0" width="3.5" height="6.2" rx="1.75" fill="#666"/><rect x="13.65" y="1.2" width="1.3" height="3.4" rx="0.65" fill="#f9f9f9"/></svg><svg class="abs" style="left:1801px;top:14.700000000000001px" width="27.5" height="18" viewBox="0 0 28 18" ><rect x="0" y="0" width="28" height="18" rx="2" fill="#666"/><rect x="0" y="4.2" width="28" height="4.8" fill="#f9f9f9"/><rect x="3" y="13" width="2.6" height="1.6" fill="#f9f9f9"/><rect x="7.0" y="13" width="4.8" height="1.6" fill="#f9f9f9"/></svg><svg class="abs" style="left:1842.1px;top:14.8px" width="17.3" height="17.3" viewBox="0 0 17.3 17.3" ><path d="M16.7,0.6 L11.4,5.9" stroke="#666" stroke-width="2.8" fill="none"/><path d="M8.9,2.2 V8.4 H15.1z" fill="#666"/><path d="M0.6,16.7 L5.9,11.4" stroke="#666" stroke-width="2.8" fill="none"/><path d="M8.4,15.1 V8.9 H2.2z" fill="#666"/></svg><svg class="abs" style="left:1873px;top:14.700000000000001px" width="14" height="16.5" viewBox="0 0 14 16.5" ><path d="M2.6,8 V5 a4.4,4.4 0 0 1 8.8,0 V8" stroke="#666" stroke-width="2.1" fill="none"/><rect x="0" y="7.2" width="14" height="9.3" rx="1.2" fill="#666"/></svg><svg class="abs" style="left:1903.6px;top:14.8px" width="17.7" height="17.7" viewBox="0 0 20 20" ><path d="M17.23,8.02 L19.65,8.32 L19.65,11.68 L17.23,11.98 L16.51,13.72 L18.02,15.64 L15.64,18.02 L13.72,16.51 L11.98,17.23 L11.68,19.65 L8.32,19.65 L8.02,17.23 L6.28,16.51 L4.36,18.02 L1.98,15.64 L3.49,13.72 L2.77,11.98 L0.35,11.68 L0.35,8.32 L2.77,8.02 L3.49,6.28 L1.98,4.36 L4.36,1.98 L6.28,3.49 L8.02,2.77 L8.32,0.35 L11.68,0.35 L11.98,2.77 L13.72,3.49 L15.64,1.98 L18.02,4.36 L16.51,6.28Z M13.90,10.00 A3.9,3.9 0 1 0 6.10,10.00 A3.9,3.9 0 1 0 13.90,10.00Z" fill="#666" fill-rule="evenodd" stroke="#666" stroke-width="0.6" stroke-linejoin="round"/></svg></div>
<div class="row" style="top:665px;height:48.5px"><i class="ln"></i><svg class="abs" style="left:14.200000000000003px;top:13.75px" width="23.6" height="23.6" viewBox="0 0 23.6 23.6" ><rect x="1.2" y="1.2" width="21.200000000000003" height="21.200000000000003" rx="4.8" fill="#fff" stroke="#a0a0a0" stroke-width="2.4"/></svg><div class="c" style="left:143.8px;top:15.4px;letter-spacing:-0.002px">Anjali Rajput</div><div class="c" style="left:480.9px;top:15.4px;letter-spacing:-0.08px">anjali.rajput+test123@hapana.com</div><div class="c" style="left:757.5px;top:15.4px;letter-spacing:-1.344px">1547511</div><div class="c" style="left:957.9px;top:15.4px;letter-spacing:-0.177px">Female</div><svg class="abs" style="left:1705px;top:13.05px" width="18.5" height="21" viewBox="0 0 18.5 21" ><path d="M1,0 H10.6 V7.6 H18.5 V20 a1,1 0 0 1 -1,1 H1 a1,1 0 0 1 -1,-1 V1 a1,1 0 0 1 1,-1z M12.2,0.6 L18,6.2 H12.2z" fill="#666"/></svg><svg class="abs" style="left:1736.5px;top:14.450000000000001px" width="18" height="18" viewBox="0 0 20 20" ><circle cx="10" cy="10" r="10" fill="#666"/><path d="M8.6,3.2 h3 v2.9 h-3z M7.2,7.6 h4.6 v6.6 h1.4 v2.6 H7 v-2.6 h1.5 v-4 H7.2z" fill="#fff"/></svg><svg class="abs" style="left:1768px;top:12.950000000000001px" width="19.2" height="21.2" viewBox="0 0 19.2 21.2" ><rect x="0" y="3.5" width="19.2" height="17.7" rx="1.6" fill="#666"/><rect x="1.75" y="8.30" width="2.9" height="2.9" fill="#fff"/><rect x="6.00" y="8.30" width="2.9" height="2.9" fill="#fff"/><rect x="10.25" y="8.30" width="2.9" height="2.9" fill="#fff"/><rect x="14.50" y="8.30" width="2.9" height="2.9" fill="#fff"/><rect x="1.75" y="12.55" width="2.9" height="2.9" fill="#fff"/><rect x="6.00" y="12.55" width="2.9" height="2.9" fill="#fff"/><rect x="10.25" y="12.55" width="2.9" height="2.9" fill="#fff"/><rect x="14.50" y="12.55" width="2.9" height="2.9" fill="#fff"/><rect x="1.75" y="16.80" width="2.9" height="2.9" fill="#fff"/><rect x="6.00" y="16.80" width="2.9" height="2.9" fill="#fff"/><rect x="10.25" y="16.80" width="2.9" height="2.9" fill="#fff"/><rect x="14.50" y="16.80" width="2.9" height="2.9" fill="#fff"/><rect x="2.95" y="3.5" width="4.7" height="3.3" rx="1.2" fill="#fff"/><rect x="3.55" y="0" width="3.5" height="6.2" rx="1.75" fill="#666"/><rect x="4.65" y="1.2" width="1.3" height="3.4" rx="0.65" fill="#fff"/><rect x="11.95" y="3.5" width="4.7" height="3.3" rx="1.2" fill="#fff"/><rect x="12.55" y="0" width="3.5" height="6.2" rx="1.75" fill="#666"/><rect x="13.65" y="1.2" width="1.3" height="3.4" rx="0.65" fill="#fff"/></svg><svg class="abs" style="left:1801px;top:14.450000000000001px" width="27.5" height="18" viewBox="0 0 28 18" ><rect x="0" y="0" width="28" height="18" rx="2" fill="#666"/><rect x="0" y="4.2" width="28" height="4.8" fill="#fff"/><rect x="3" y="13" width="2.6" height="1.6" fill="#fff"/><rect x="7.0" y="13" width="4.8" height="1.6" fill="#fff"/></svg><svg class="abs" style="left:1842.1px;top:14.55px" width="17.3" height="17.3" viewBox="0 0 17.3 17.3" ><path d="M16.7,0.6 L11.4,5.9" stroke="#666" stroke-width="2.8" fill="none"/><path d="M8.9,2.2 V8.4 H15.1z" fill="#666"/><path d="M0.6,16.7 L5.9,11.4" stroke="#666" stroke-width="2.8" fill="none"/><path d="M8.4,15.1 V8.9 H2.2z" fill="#666"/></svg><svg class="abs" style="left:1873px;top:14.450000000000001px" width="14" height="16.5" viewBox="0 0 14 16.5" ><path d="M2.6,8 V5 a4.4,4.4 0 0 1 8.8,0 V8" stroke="#666" stroke-width="2.1" fill="none"/><rect x="0" y="7.2" width="14" height="9.3" rx="1.2" fill="#666"/></svg><svg class="abs" style="left:1903.6px;top:14.55px" width="17.7" height="17.7" viewBox="0 0 20 20" ><path d="M17.23,8.02 L19.65,8.32 L19.65,11.68 L17.23,11.98 L16.51,13.72 L18.02,15.64 L15.64,18.02 L13.72,16.51 L11.98,17.23 L11.68,19.65 L8.32,19.65 L8.02,17.23 L6.28,16.51 L4.36,18.02 L1.98,15.64 L3.49,13.72 L2.77,11.98 L0.35,11.68 L0.35,8.32 L2.77,8.02 L3.49,6.28 L1.98,4.36 L4.36,1.98 L6.28,3.49 L8.02,2.77 L8.32,0.35 L11.68,0.35 L11.98,2.77 L13.72,3.49 L15.64,1.98 L18.02,4.36 L16.51,6.28Z M13.90,10.00 A3.9,3.9 0 1 0 6.10,10.00 A3.9,3.9 0 1 0 13.90,10.00Z" fill="#666" fill-rule="evenodd" stroke="#666" stroke-width="0.6" stroke-linejoin="round"/></svg></div>
<div class="row alt" style="top:713.5px;height:48.5px"><i class="ln"></i><svg class="abs" style="left:14.200000000000003px;top:13.75px" width="23.6" height="23.6" viewBox="0 0 23.6 23.6" ><rect x="1.2" y="1.2" width="21.200000000000003" height="21.200000000000003" rx="4.8" fill="#fff" stroke="#a0a0a0" stroke-width="2.4"/></svg><div class="c" style="left:143.8px;top:15.4px;letter-spacing:-0.071px">Atul Zapier 2</div><div class="c" style="left:480.9px;top:15.4px;letter-spacing:-0.008px">atul.zapier2@onefitstop.com</div><div class="c" style="left:757.5px;top:15.4px;letter-spacing:-0.732px">971552</div><svg class="abs" style="left:1705px;top:13.05px" width="18.5" height="21" viewBox="0 0 18.5 21" ><path d="M1,0 H10.6 V7.6 H18.5 V20 a1,1 0 0 1 -1,1 H1 a1,1 0 0 1 -1,-1 V1 a1,1 0 0 1 1,-1z M12.2,0.6 L18,6.2 H12.2z" fill="#666"/></svg><svg class="abs" style="left:1736.5px;top:14.450000000000001px" width="18" height="18" viewBox="0 0 20 20" ><circle cx="10" cy="10" r="10" fill="#666"/><path d="M8.6,3.2 h3 v2.9 h-3z M7.2,7.6 h4.6 v6.6 h1.4 v2.6 H7 v-2.6 h1.5 v-4 H7.2z" fill="#fff"/></svg><svg class="abs" style="left:1768px;top:12.950000000000001px" width="19.2" height="21.2" viewBox="0 0 19.2 21.2" ><rect x="0" y="3.5" width="19.2" height="17.7" rx="1.6" fill="#666"/><rect x="1.75" y="8.30" width="2.9" height="2.9" fill="#f9f9f9"/><rect x="6.00" y="8.30" width="2.9" height="2.9" fill="#f9f9f9"/><rect x="10.25" y="8.30" width="2.9" height="2.9" fill="#f9f9f9"/><rect x="14.50" y="8.30" width="2.9" height="2.9" fill="#f9f9f9"/><rect x="1.75" y="12.55" width="2.9" height="2.9" fill="#f9f9f9"/><rect x="6.00" y="12.55" width="2.9" height="2.9" fill="#f9f9f9"/><rect x="10.25" y="12.55" width="2.9" height="2.9" fill="#f9f9f9"/><rect x="14.50" y="12.55" width="2.9" height="2.9" fill="#f9f9f9"/><rect x="1.75" y="16.80" width="2.9" height="2.9" fill="#f9f9f9"/><rect x="6.00" y="16.80" width="2.9" height="2.9" fill="#f9f9f9"/><rect x="10.25" y="16.80" width="2.9" height="2.9" fill="#f9f9f9"/><rect x="14.50" y="16.80" width="2.9" height="2.9" fill="#f9f9f9"/><rect x="2.95" y="3.5" width="4.7" height="3.3" rx="1.2" fill="#f9f9f9"/><rect x="3.55" y="0" width="3.5" height="6.2" rx="1.75" fill="#666"/><rect x="4.65" y="1.2" width="1.3" height="3.4" rx="0.65" fill="#f9f9f9"/><rect x="11.95" y="3.5" width="4.7" height="3.3" rx="1.2" fill="#f9f9f9"/><rect x="12.55" y="0" width="3.5" height="6.2" rx="1.75" fill="#666"/><rect x="13.65" y="1.2" width="1.3" height="3.4" rx="0.65" fill="#f9f9f9"/></svg><svg class="abs" style="left:1801px;top:14.450000000000001px" width="27.5" height="18" viewBox="0 0 28 18" ><rect x="0" y="0" width="28" height="18" rx="2" fill="#666"/><rect x="0" y="4.2" width="28" height="4.8" fill="#f9f9f9"/><rect x="3" y="13" width="2.6" height="1.6" fill="#f9f9f9"/><rect x="7.0" y="13" width="4.8" height="1.6" fill="#f9f9f9"/></svg><svg class="abs" style="left:1842.1px;top:14.55px" width="17.3" height="17.3" viewBox="0 0 17.3 17.3" ><path d="M16.7,0.6 L11.4,5.9" stroke="#666" stroke-width="2.8" fill="none"/><path d="M8.9,2.2 V8.4 H15.1z" fill="#666"/><path d="M0.6,16.7 L5.9,11.4" stroke="#666" stroke-width="2.8" fill="none"/><path d="M8.4,15.1 V8.9 H2.2z" fill="#666"/></svg><svg class="abs" style="left:1873px;top:14.450000000000001px" width="14" height="16.5" viewBox="0 0 14 16.5" ><path d="M2.6,8 V5 a4.4,4.4 0 0 1 8.8,0 V8" stroke="#666" stroke-width="2.1" fill="none"/><rect x="0" y="7.2" width="14" height="9.3" rx="1.2" fill="#666"/></svg><svg class="abs" style="left:1903.6px;top:14.55px" width="17.7" height="17.7" viewBox="0 0 20 20" ><path d="M17.23,8.02 L19.65,8.32 L19.65,11.68 L17.23,11.98 L16.51,13.72 L18.02,15.64 L15.64,18.02 L13.72,16.51 L11.98,17.23 L11.68,19.65 L8.32,19.65 L8.02,17.23 L6.28,16.51 L4.36,18.02 L1.98,15.64 L3.49,13.72 L2.77,11.98 L0.35,11.68 L0.35,8.32 L2.77,8.02 L3.49,6.28 L1.98,4.36 L4.36,1.98 L6.28,3.49 L8.02,2.77 L8.32,0.35 L11.68,0.35 L11.98,2.77 L13.72,3.49 L15.64,1.98 L18.02,4.36 L16.51,6.28Z M13.90,10.00 A3.9,3.9 0 1 0 6.10,10.00 A3.9,3.9 0 1 0 13.90,10.00Z" fill="#666" fill-rule="evenodd" stroke="#666" stroke-width="0.6" stroke-linejoin="round"/></svg></div>
<div class="row" style="top:762px;height:48.5px"><i class="ln"></i><svg class="abs" style="left:14.200000000000003px;top:13.75px" width="23.6" height="23.6" viewBox="0 0 23.6 23.6" ><rect x="1.2" y="1.2" width="21.200000000000003" height="21.200000000000003" rx="4.8" fill="#fff" stroke="#a0a0a0" stroke-width="2.4"/></svg><div class="c" style="left:143.8px;top:15.4px;letter-spacing:-0.246px">Atul Roy</div><div class="c" style="left:480.9px;top:15.4px;letter-spacing:0.006px">atul.kumar+client2@onefitstop.com</div><div class="c" style="left:757.5px;top:15.4px;letter-spacing:-0.732px">163823</div><div class="c" style="left:957.9px;top:15.4px;letter-spacing:0.053px">Male</div><svg class="abs" style="left:1156.8px;top:14.35px" width="18.2" height="18.2" viewBox="0 0 20 20" ><circle cx="10" cy="10" r="10" fill="#7f9fd6"/><path d="M4.6,10.2 L8.5,14.0 L15.4,7.0" stroke="#fff" stroke-width="3.3" fill="none"/></svg><div class="c" style="left:1178.3px;top:16.1px;letter-spacing:0.401px">424240067</div><svg class="abs" style="left:1705px;top:13.05px" width="18.5" height="21" viewBox="0 0 18.5 21" ><path d="M1,0 H10.6 V7.6 H18.5 V20 a1,1 0 0 1 -1,1 H1 a1,1 0 0 1 -1,-1 V1 a1,1 0 0 1 1,-1z M12.2,0.6 L18,6.2 H12.2z" fill="#666"/></svg><svg class="abs" style="left:1736.5px;top:14.450000000000001px" width="18" height="18" viewBox="0 0 20 20" ><circle cx="10" cy="10" r="10" fill="#666"/><path d="M8.6,3.2 h3 v2.9 h-3z M7.2,7.6 h4.6 v6.6 h1.4 v2.6 H7 v-2.6 h1.5 v-4 H7.2z" fill="#fff"/></svg><svg class="abs" style="left:1768px;top:12.950000000000001px" width="19.2" height="21.2" viewBox="0 0 19.2 21.2" ><rect x="0" y="3.5" width="19.2" height="17.7" rx="1.6" fill="#666"/><rect x="1.75" y="8.30" width="2.9" height="2.9" fill="#fff"/><rect x="6.00" y="8.30" width="2.9" height="2.9" fill="#fff"/><rect x="10.25" y="8.30" width="2.9" height="2.9" fill="#fff"/><rect x="14.50" y="8.30" width="2.9" height="2.9" fill="#fff"/><rect x="1.75" y="12.55" width="2.9" height="2.9" fill="#fff"/><rect x="6.00" y="12.55" width="2.9" height="2.9" fill="#fff"/><rect x="10.25" y="12.55" width="2.9" height="2.9" fill="#fff"/><rect x="14.50" y="12.55" width="2.9" height="2.9" fill="#fff"/><rect x="1.75" y="16.80" width="2.9" height="2.9" fill="#fff"/><rect x="6.00" y="16.80" width="2.9" height="2.9" fill="#fff"/><rect x="10.25" y="16.80" width="2.9" height="2.9" fill="#fff"/><rect x="14.50" y="16.80" width="2.9" height="2.9" fill="#fff"/><rect x="2.95" y="3.5" width="4.7" height="3.3" rx="1.2" fill="#fff"/><rect x="3.55" y="0" width="3.5" height="6.2" rx="1.75" fill="#666"/><rect x="4.65" y="1.2" width="1.3" height="3.4" rx="0.65" fill="#fff"/><rect x="11.95" y="3.5" width="4.7" height="3.3" rx="1.2" fill="#fff"/><rect x="12.55" y="0" width="3.5" height="6.2" rx="1.75" fill="#666"/><rect x="13.65" y="1.2" width="1.3" height="3.4" rx="0.65" fill="#fff"/></svg><svg class="abs" style="left:1801px;top:14.450000000000001px" width="27.5" height="18" viewBox="0 0 28 18" ><rect x="0" y="0" width="28" height="18" rx="2" fill="#666"/><rect x="0" y="4.2" width="28" height="4.8" fill="#fff"/><rect x="3" y="13" width="2.6" height="1.6" fill="#fff"/><rect x="7.0" y="13" width="4.8" height="1.6" fill="#fff"/></svg><svg class="abs" style="left:1842.1px;top:14.55px" width="17.3" height="17.3" viewBox="0 0 17.3 17.3" ><path d="M16.7,0.6 L11.4,5.9" stroke="#666" stroke-width="2.8" fill="none"/><path d="M8.9,2.2 V8.4 H15.1z" fill="#666"/><path d="M0.6,16.7 L5.9,11.4" stroke="#666" stroke-width="2.8" fill="none"/><path d="M8.4,15.1 V8.9 H2.2z" fill="#666"/></svg><svg class="abs" style="left:1873px;top:14.450000000000001px" width="14" height="16.5" viewBox="0 0 14 16.5" ><path d="M2.6,8 V5 a4.4,4.4 0 0 1 8.8,0 V8" stroke="#666" stroke-width="2.1" fill="none"/><rect x="0" y="7.2" width="14" height="9.3" rx="1.2" fill="#666"/></svg><svg class="abs" style="left:1903.6px;top:14.55px" width="17.7" height="17.7" viewBox="0 0 20 20" ><path d="M17.23,8.02 L19.65,8.32 L19.65,11.68 L17.23,11.98 L16.51,13.72 L18.02,15.64 L15.64,18.02 L13.72,16.51 L11.98,17.23 L11.68,19.65 L8.32,19.65 L8.02,17.23 L6.28,16.51 L4.36,18.02 L1.98,15.64 L3.49,13.72 L2.77,11.98 L0.35,11.68 L0.35,8.32 L2.77,8.02 L3.49,6.28 L1.98,4.36 L4.36,1.98 L6.28,3.49 L8.02,2.77 L8.32,0.35 L11.68,0.35 L11.98,2.77 L13.72,3.49 L15.64,1.98 L18.02,4.36 L16.51,6.28Z M13.90,10.00 A3.9,3.9 0 1 0 6.10,10.00 A3.9,3.9 0 1 0 13.90,10.00Z" fill="#666" fill-rule="evenodd" stroke="#666" stroke-width="0.6" stroke-linejoin="round"/></svg></div>
<div class="row alt" style="top:810.5px;height:48.5px"><i class="ln"></i><svg class="abs" style="left:14.200000000000003px;top:13.75px" width="23.6" height="23.6" viewBox="0 0 23.6 23.6" ><rect x="1.2" y="1.2" width="21.200000000000003" height="21.200000000000003" rx="4.8" fill="#fff" stroke="#a0a0a0" stroke-width="2.4"/></svg><div class="c" style="left:143.8px;top:15.4px;letter-spacing:-0.107px">Bar Code Test</div><div class="c" style="left:480.9px;top:15.4px;letter-spacing:-0.005px">barcodetest@rocketmail.com</div><div class="c" style="left:757.5px;top:15.4px;letter-spacing:-0.834px">115689</div><svg class="abs" style="left:1156.8px;top:14.35px" width="18.2" height="18.2" viewBox="0 0 20 20" ><circle cx="10" cy="10" r="10" fill="#ef2a12"/><path d="M6.1,6.1 L13.9,13.9 M13.9,6.1 L6.1,13.9" stroke="#fff" stroke-width="3.3" stroke-linecap="butt"/></svg><div class="c" style="left:1178.3px;top:16.1px;letter-spacing:-0.348px">0123456789</div><svg class="abs" style="left:1705px;top:13.05px" width="18.5" height="21" viewBox="0 0 18.5 21" ><path d="M1,0 H10.6 V7.6 H18.5 V20 a1,1 0 0 1 -1,1 H1 a1,1 0 0 1 -1,-1 V1 a1,1 0 0 1 1,-1z M12.2,0.6 L18,6.2 H12.2z" fill="#666"/></svg><svg class="abs" style="left:1736.5px;top:14.450000000000001px" width="18" height="18" viewBox="0 0 20 20" ><circle cx="10" cy="10" r="10" fill="#666"/><path d="M8.6,3.2 h3 v2.9 h-3z M7.2,7.6 h4.6 v6.6 h1.4 v2.6 H7 v-2.6 h1.5 v-4 H7.2z" fill="#fff"/></svg><svg class="abs" style="left:1768px;top:12.950000000000001px" width="19.2" height="21.2" viewBox="0 0 19.2 21.2" ><rect x="0" y="3.5" width="19.2" height="17.7" rx="1.6" fill="#666"/><rect x="1.75" y="8.30" width="2.9" height="2.9" fill="#f9f9f9"/><rect x="6.00" y="8.30" width="2.9" height="2.9" fill="#f9f9f9"/><rect x="10.25" y="8.30" width="2.9" height="2.9" fill="#f9f9f9"/><rect x="14.50" y="8.30" width="2.9" height="2.9" fill="#f9f9f9"/><rect x="1.75" y="12.55" width="2.9" height="2.9" fill="#f9f9f9"/><rect x="6.00" y="12.55" width="2.9" height="2.9" fill="#f9f9f9"/><rect x="10.25" y="12.55" width="2.9" height="2.9" fill="#f9f9f9"/><rect x="14.50" y="12.55" width="2.9" height="2.9" fill="#f9f9f9"/><rect x="1.75" y="16.80" width="2.9" height="2.9" fill="#f9f9f9"/><rect x="6.00" y="16.80" width="2.9" height="2.9" fill="#f9f9f9"/><rect x="10.25" y="16.80" width="2.9" height="2.9" fill="#f9f9f9"/><rect x="14.50" y="16.80" width="2.9" height="2.9" fill="#f9f9f9"/><rect x="2.95" y="3.5" width="4.7" height="3.3" rx="1.2" fill="#f9f9f9"/><rect x="3.55" y="0" width="3.5" height="6.2" rx="1.75" fill="#666"/><rect x="4.65" y="1.2" width="1.3" height="3.4" rx="0.65" fill="#f9f9f9"/><rect x="11.95" y="3.5" width="4.7" height="3.3" rx="1.2" fill="#f9f9f9"/><rect x="12.55" y="0" width="3.5" height="6.2" rx="1.75" fill="#666"/><rect x="13.65" y="1.2" width="1.3" height="3.4" rx="0.65" fill="#f9f9f9"/></svg><svg class="abs" style="left:1801px;top:14.450000000000001px" width="27.5" height="18" viewBox="0 0 28 18" ><rect x="0" y="0" width="28" height="18" rx="2" fill="#666"/><rect x="0" y="4.2" width="28" height="4.8" fill="#f9f9f9"/><rect x="3" y="13" width="2.6" height="1.6" fill="#f9f9f9"/><rect x="7.0" y="13" width="4.8" height="1.6" fill="#f9f9f9"/></svg><svg class="abs" style="left:1842.1px;top:14.55px" width="17.3" height="17.3" viewBox="0 0 17.3 17.3" ><path d="M16.7,0.6 L11.4,5.9" stroke="#666" stroke-width="2.8" fill="none"/><path d="M8.9,2.2 V8.4 H15.1z" fill="#666"/><path d="M0.6,16.7 L5.9,11.4" stroke="#666" stroke-width="2.8" fill="none"/><path d="M8.4,15.1 V8.9 H2.2z" fill="#666"/></svg><svg class="abs" style="left:1873px;top:14.450000000000001px" width="14" height="16.5" viewBox="0 0 14 16.5" ><path d="M2.6,8 V5 a4.4,4.4 0 0 1 8.8,0 V8" stroke="#666" stroke-width="2.1" fill="none"/><rect x="0" y="7.2" width="14" height="9.3" rx="1.2" fill="#666"/></svg><svg class="abs" style="left:1903.6px;top:14.55px" width="17.7" height="17.7" viewBox="0 0 20 20" ><path d="M17.23,8.02 L19.65,8.32 L19.65,11.68 L17.23,11.98 L16.51,13.72 L18.02,15.64 L15.64,18.02 L13.72,16.51 L11.98,17.23 L11.68,19.65 L8.32,19.65 L8.02,17.23 L6.28,16.51 L4.36,18.02 L1.98,15.64 L3.49,13.72 L2.77,11.98 L0.35,11.68 L0.35,8.32 L2.77,8.02 L3.49,6.28 L1.98,4.36 L4.36,1.98 L6.28,3.49 L8.02,2.77 L8.32,0.35 L11.68,0.35 L11.98,2.77 L13.72,3.49 L15.64,1.98 L18.02,4.36 L16.51,6.28Z M13.90,10.00 A3.9,3.9 0 1 0 6.10,10.00 A3.9,3.9 0 1 0 13.90,10.00Z" fill="#666" fill-rule="evenodd" stroke="#666" stroke-width="0.6" stroke-linejoin="round"/></svg></div>
<i class="abs" style="left:24px;top:859px;width:2000px;height:1px;background:#eeeeee"></i>
<div id="pag">
<div class="pg on" style="width:36.5px">1</div>
<div class="pg" style="width:35px">2</div>
<div class="pg" style="width:36px">3</div>
<div class="pg" style="width:35px">&gt;</div>
<div class="pg" style="width:35px">»</div>
</div>
<div class="abs" style="left:1858.2px;top:625.8px;width:29.5px;height:30.2px;border:3px solid #cc2229;border-radius:7px;"></div>
<div class="abs" style="left:1814px;top:591px;width:118px;height:29px;border-radius:5px;background:#1d1d1f;color:#fff;font-size:15.75px;line-height:30.5px;text-align:center;-webkit-text-stroke:0.3px;">Merge Clients</div>
<div class="abs" style="left:1867px;top:620px;width:0;height:0;border-left:6px solid transparent;border-right:6px solid transparent;border-top:6px solid #23232b;"></div>
<svg class="abs" style="left:1770px;top:650px" width="110" height="110" viewBox="0 0 110 110"><path d="M14.11,94.03 L18.59,97.87 L73.5,33.5 L69.0,29.7z" fill="#de282c"/><path d="M87.1,13.6 L60.4,24.6 L79.6,41.5z" fill="#de282c"/></svg>
<div class="abs" style="left:1664.5px;top:1096.5px;width:86px;height:65px;border-radius:33px;background:#fff;box-shadow:0 1px 6px rgba(0,0,0,0.13);"></div>
<svg class="abs" style="left:1689.7px;top:1115.2px" width="36.2" height="28.6" viewBox="0 0 36 28.6" ><path d="M1,7 V1 H7.2 M28.8,1 H35 V7 M35,21.6 V27.6 H28.8 M7.2,27.6 H1 V21.6" fill="none" stroke="#e0583b" stroke-width="2"/><rect x="5.10" y="4.9" width="2.2" height="18.6" fill="#e0583b"/><rect x="9.80" y="4.9" width="2.2" height="1.7" fill="#e0583b"/><rect x="9.80" y="9.8" width="2.2" height="13.7" fill="#e0583b"/><rect x="14.50" y="4.9" width="2.2" height="1.7" fill="#e0583b"/><rect x="14.50" y="9.8" width="2.2" height="13.7" fill="#e0583b"/><rect x="19.40" y="4.9" width="2.2" height="18.6" fill="#e0583b"/><rect x="24.30" y="4.9" width="2.2" height="1.7" fill="#e0583b"/><rect x="24.30" y="9.8" width="2.2" height="13.7" fill="#e0583b"/><rect x="28.90" y="4.9" width="2.2" height="18.6" fill="#e0583b"/></svg>
<div class="abs" style="left:0;top:1207px;width:2048px;height:64.5px;background:#e1e1e1;"></div>
<div class="abs" style="top:1207px;white-space:nowrap;color:#7a7a7a;font-size:17px;line-height:66px;-webkit-text-stroke:0.3px;left:846.9px;letter-spacing:0.166px">Copyright © 2025 Hapana. All rights reserved.</div>
</body>
</html>
